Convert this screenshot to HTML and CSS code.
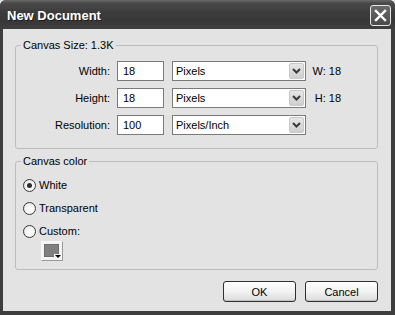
FILE: index.html
```html
<!DOCTYPE html>
<html>
<head>
<meta charset="utf-8">
<link rel="stylesheet" href="styles.css">
</head>
<body>
<div class="window">
  <div class="titlebar">
    <span class="title">New Document</span>
    <span class="close">
      <svg width="13" height="13" viewBox="0 0 13 13"><path d="M2 2 L11 11 M11 2 L2 11" stroke="#fff" stroke-width="2.4" stroke-linecap="square"/></svg>
    </span>
  </div>
  <div class="content">
    <fieldset class="group size">
      <legend>Canvas Size: 1.3K</legend>
      <div class="grid">
        <label class="lbl">Width:</label>
        <div class="input">18</div>
        <div class="select"><span>Pixels</span><span class="dd"><svg width="9" height="6" viewBox="0 0 9 6"><path d="M1 1 L4.5 4.5 L8 1" fill="none" stroke="#3a3a3a" stroke-width="2"/></svg></span></div>
        <span class="dim">W: 18</span>

        <label class="lbl">Height:</label>
        <div class="input">18</div>
        <div class="select"><span>Pixels</span><span class="dd"><svg width="9" height="6" viewBox="0 0 9 6"><path d="M1 1 L4.5 4.5 L8 1" fill="none" stroke="#3a3a3a" stroke-width="2"/></svg></span></div>
        <span class="dim">H: 18</span>

        <label class="lbl">Resolution:</label>
        <div class="input">100</div>
        <div class="select"><span>Pixels/Inch</span><span class="dd"><svg width="9" height="6" viewBox="0 0 9 6"><path d="M1 1 L4.5 4.5 L8 1" fill="none" stroke="#3a3a3a" stroke-width="2"/></svg></span></div>
        <span class="dim"></span>
      </div>
    </fieldset>
    <fieldset class="group color">
      <legend>Canvas color</legend>
      <div class="radios">
        <div class="radio"><span class="circle checked"></span><span>White</span></div>
        <div class="radio"><span class="circle"></span><span>Transparent</span></div>
        <div class="radio"><span class="circle"></span><span>Custom:</span></div>
        <div class="swatch"><span class="fill"></span><span class="tri"></span></div>
      </div>
    </fieldset>
    <div class="buttons">
      <button class="btn">OK</button>
      <button class="btn">Cancel</button>
    </div>
  </div>
</div>
</body>
</html>
```
FILE: styles.css
```css
html, body {
  margin: 0;
  padding: 0;
  background: #e3e3e3;
}
body {
  font-family: "Liberation Sans", Arial, sans-serif;
  font-size: 11px;
  color: #000;
}
.window {
  width: 395px;
  height: 315px;
  box-sizing: border-box;
  display: flex;
  flex-direction: column;
  background: #3e3e3e;
  border-radius: 6px 6px 0 0;
  overflow: hidden;
}
.titlebar {
  height: 29px;
  flex: none;
  display: flex;
  align-items: center;
  justify-content: space-between;
  padding: 0 4px 0 7px;
  background: linear-gradient(#6a6a6a 0, #4a4a4a 3px, #3c3c3c 12px, #383838 22px, #404040 29px);
}
.title {
  color: #fff;
  font-weight: bold;
  font-size: 13px;
  letter-spacing: 0;
  text-shadow: 1px 1px 0 #1e1e1e;
  margin-top: 1px;
}
.close {
  width: 21px;
  height: 21px;
  box-sizing: border-box;
  border: 1px solid #e8e8e8;
  border-radius: 3px;
  background: linear-gradient(#6a6a6a, #4a4a4a);
  display: flex;
  align-items: center;
  justify-content: center;
  margin-top: 1px;
}
.content {
  flex: 1;
  margin: 0 4px 4px 3px;
  background: #e3e3e3;
  padding: 10px 13px 0 12px;
  display: flex;
  flex-direction: column;
}
.group {
  margin: 0;
  padding: 0;
  border: 1px solid #bdbdbd;
  border-radius: 3px;
  min-width: 0;
  flex: none;
}
.group legend {
  margin-left: 5px;
  padding: 0 2px;
  line-height: 13px;
  height: 13px;
  color: #000;
}
.grid {
  display: grid;
  grid-template-columns: 94px 47px 135px 28px;
  grid-auto-rows: 20px;
  column-gap: 7px;
  row-gap: 7px;
  padding: 9px 0 13px 0;
  align-items: center;
}
.grid .select { margin-left: 1px; }
.lbl {
  text-align: right;
}
.input {
  height: 20px;
  box-sizing: border-box;
  border: 1px solid #7a7a7a;
  background: #fff;
  padding-left: 5px;
  line-height: 18px;
}
.select {
  height: 20px;
  box-sizing: border-box;
  border: 1px solid #7a7a7a;
  background: #fff;
  padding-left: 3px;
  line-height: 18px;
  display: flex;
  justify-content: space-between;
  align-items: center;
}
.dd {
  width: 15px;
  height: 16px;
  margin-right: 1px;
  box-sizing: border-box;
  border: 1px solid #c8c8c8;
  border-radius: 2px;
  background: linear-gradient(#e6e6e6, #cfcfcf);
  display: flex;
  align-items: center;
  justify-content: center;
}
.dim {
  text-align: right;
  margin-left: -1px;
}
.color {
  margin-top: 6px;
}
.radios {
  display: flex;
  flex-direction: column;
  padding: 6px 0 8px 7px;
}
.radio {
  display: flex;
  align-items: center;
  height: 22px;
  gap: 3px;
}
.radio + .radio { margin-top: 1px; }
.circle {
  width: 13px;
  height: 13px;
  box-sizing: border-box;
  border: 1px solid #3a3a3a;
  border-radius: 50%;
  background: radial-gradient(circle at 60% 60%, #ffffff 0, #f4f4f4 50%, #d6d6d6 100%);
  position: relative;
}
.circle.checked::after {
  content: "";
  position: absolute;
  left: 3px;
  top: 3px;
  width: 5px;
  height: 5px;
  border-radius: 50%;
  background: #2e2e2e;
}
.swatch {
  width: 22px;
  height: 20px;
  box-sizing: border-box;
  border: 1px solid #9a9a9a;
  border-top-color: #f6f6f6;
  border-left-color: #f6f6f6;
  background: #f4f4f4;
  padding: 2px 3px 3px 2px;
  margin: -1px 0 0 18px;
  position: relative;
}
.swatch .fill {
  display: block;
  width: 100%;
  height: 100%;
  background: #808080;
  border: 1px solid #6e6e6e;
  box-sizing: border-box;
}
.swatch .tri {
  position: absolute;
  right: 1px;
  bottom: 1px;
  width: 7px;
  height: 5px;
  background: #f4f4f4;
}
.swatch .tri::after {
  content: "";
  position: absolute;
  left: 1px;
  top: 1px;
  border-left: 3px solid transparent;
  border-right: 3px solid transparent;
  border-top: 3px solid #000;
}
.buttons {
  display: flex;
  justify-content: flex-end;
  gap: 9px;
  margin-top: 11px;
}
.btn {
  width: 73px;
  height: 21px;
  box-sizing: border-box;
  border: 1px solid #2f2f2f;
  border-radius: 3px;
  background: linear-gradient(#ffffff 0, #f2f2f2 50%, #e0e0e0 90%, #cfcfcf 100%);
  font-family: "Liberation Sans", Arial, sans-serif;
  font-size: 11px;
  color: #000;
  padding: 0;
  box-shadow: inset 0 -1px 0 #c4c4c4;
}
```
